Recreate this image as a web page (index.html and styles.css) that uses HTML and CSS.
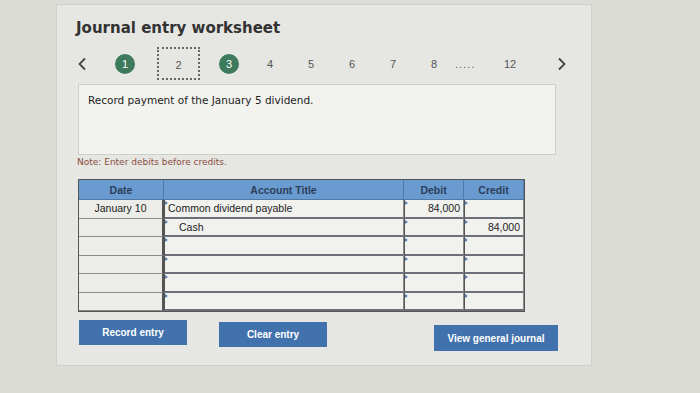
FILE: index.html
```html
<!DOCTYPE html>
<html lang="en">
  <head>
    <meta charset="UTF-8" />
    <title>Journal entry worksheet</title>
    <link rel="stylesheet" href="styles.css">
  </head>
  <body>
    <div class="panel">
      <h1 class="title">Journal entry worksheet</h1>

      <div class="steps">
        <span class="arrow">
          <svg width="10" height="14" viewBox="0 0 10 14"><path d="M8 1.5 L2.5 7 L8 12.5" fill="none" stroke="#444" stroke-width="1.8"/></svg>
        </span>
        <span class="step done first">1</span>
        <span class="step current">2</span>
        <span class="step done third">3</span>
        <span class="step">4</span>
        <span class="step">5</span>
        <span class="step">6</span>
        <span class="step">7</span>
        <span class="step">8</span>
        <span class="more">.....</span>
        <span class="step last">12</span>
        <span class="arrow right">
          <svg width="10" height="14" viewBox="0 0 10 14"><path d="M2 1.5 L7.5 7 L2 12.5" fill="none" stroke="#444" stroke-width="1.8"/></svg>
        </span>
      </div>

      <div class="task">Record payment of the January 5 dividend.</div>

      <p class="note">Note: Enter debits before credits.</p>

      <div class="journal">
        <div class="head">Date</div>
        <div class="head">Account Title</div>
        <div class="head">Debit</div>
        <div class="head">Credit</div>

        <div class="cell date">January 10</div>
        <div class="cell input">Common dividend payable</div>
        <div class="cell input num">84,000</div>
        <div class="cell input num"></div>

        <div class="cell date"></div>
        <div class="cell input indent">Cash</div>
        <div class="cell input num"></div>
        <div class="cell input num">84,000</div>

        <div class="cell date"></div>
        <div class="cell input"></div>
        <div class="cell input"></div>
        <div class="cell input"></div>

        <div class="cell date"></div>
        <div class="cell input"></div>
        <div class="cell input"></div>
        <div class="cell input"></div>

        <div class="cell date"></div>
        <div class="cell input"></div>
        <div class="cell input"></div>
        <div class="cell input"></div>

        <div class="cell date"></div>
        <div class="cell input"></div>
        <div class="cell input"></div>
        <div class="cell input"></div>
      </div>

      <div class="actions">
        <button class="btn">Record entry</button>
        <button class="btn clear">Clear entry</button>
        <button class="btn journal-btn">View general journal</button>
      </div>
    </div>
  </body>
</html>
```

FILE: styles.css
```css
* {
  box-sizing: border-box;
}
body {
  margin: 0;
  height: 393px;
  background: #dcdcd7;
  font-family: "Liberation Sans", Arial, sans-serif;
  overflow: hidden;
}
.panel {
  margin: 4px 0 0 56px;
  width: 536px;
  height: 362px;
  background: #e6e6e2;
  border: 1px solid #cfcfca;
  padding: 14px 0 0 19px;
}
.title {
  margin: 0;
  font-family: "DejaVu Sans", Verdana, sans-serif;
  font-size: 15px;
  font-weight: bold;
  color: #333;
}
.steps {
  display: flex;
  align-items: center;
  height: 33px;
  margin-top: 10px;
  font-size: 11px;
  color: #555;
}
.steps > span {
  flex-shrink: 0;
}
.arrow {
  display: flex;
  width: 39px;
  padding-left: 1px;
}
.arrow.right {
  margin-left: 36px;
}
.step {
  width: 20px;
  height: 20px;
  line-height: 20px;
  text-align: center;
  margin-left: 21px;
}
.step.first {
  margin-left: 0;
}
.step.third {
  margin-left: 19px;
}
.step.last {
  margin-left: 15px;
}
.step.done {
  border-radius: 50%;
  background: #3e7a5c;
  color: #fff;
}
.step.current {
  width: 43px;
  height: 33px;
  line-height: 33px;
  border: 2px dotted #666;
  margin-left: 22px;
}
.more {
  letter-spacing: 1px;
  width: 30px;
  margin-left: 11px;
  color: #666;
}
.task {
  margin: 4px 0 0 2px;
  width: 478px;
  height: 71px;
  background: #f2f2ef;
  border: 1px solid #cfcfca;
  padding: 9px 0 0 9px;
  font-family: "DejaVu Sans", Verdana, sans-serif;
  font-size: 10.5px;
  color: #222;
}
.note {
  margin: 2px 0 0 1px;
  font-family: "DejaVu Sans", Verdana, sans-serif;
  font-size: 9px;
  color: #8a4e3e;
}
.journal {
  display: grid;
  grid-template-columns: 85px 240px 60px 60px;
  grid-template-rows: 20px;
  grid-auto-rows: 18.5px;
  margin: 12px 0 0 2px;
  width: 447px;
  border: 1px solid #555;
  font-size: 10.5px;
  color: #222;
}
.head {
  background: #6a9bd0;
  color: #2c3e5a;
  font-weight: bold;
  text-align: center;
  line-height: 20px;
  border-right: 1px solid #4f79a6;
  border-bottom: 1px solid #4f79a6;
}
.cell {
  background: #ecece8;
  border-bottom: 1px solid #8a8a8a;
  border-right: 1px solid #8a8a8a;
  line-height: 17px;
  padding: 0 3px;
  white-space: nowrap;
}
.cell.date {
  text-align: center;
  border-right: 2px solid #555;
}
.cell.input {
  position: relative;
  background: #f1f1ee;
  border-left: 1px solid #555;
  border-bottom: 2px solid #6b6f78;
}
.cell.input::before {
  content: "";
  position: absolute;
  left: 0;
  top: 1px;
  border-left: 3px solid #5b7fb0;
  border-top: 2px solid transparent;
  border-bottom: 2px solid transparent;
}
.cell.indent {
  padding-left: 14px;
}
.cell.num {
  text-align: right;
}
.actions {
  display: flex;
  align-items: flex-start;
  margin: 8px 0 0 3px;
}
.btn {
  width: 108px;
  height: 25px;
  background: #4272ad;
  color: #fff;
  border: none;
  font-family: "Liberation Sans", Arial, sans-serif;
  font-weight: bold;
  font-size: 10px;
  padding: 0;
  margin-right: 32px;
}
.btn.clear {
  margin-top: 2px;
}
.btn.journal-btn {
  width: 124px;
  height: 26px;
  margin: 5px 0 0 75px;
}
```
